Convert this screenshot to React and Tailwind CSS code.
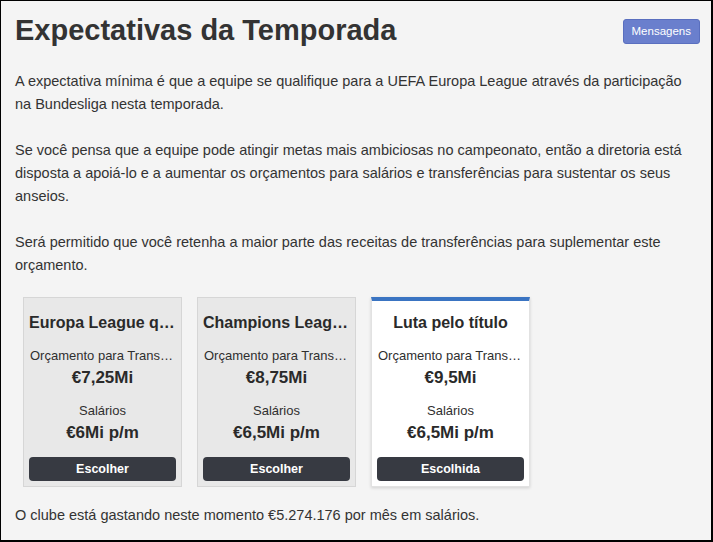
import React from 'react'

const OPTIONS = [
  { title: 'Europa League qualificação', budget: '€7,25Mi', wages: '€6Mi p/m', selected: false },
  { title: 'Champions League qualificação', budget: '€8,75Mi', wages: '€6,5Mi p/m', selected: false },
  { title: 'Luta pelo título', budget: '€9,5Mi', wages: '€6,5Mi p/m', selected: true },
]

function OptionCard({ o }) {
  return (
    <div
      className={`w-[159px] h-[190px] flex flex-col text-center border px-[5px] pb-[5px] ${
        o.selected
          ? 'bg-white border-[#e2e2e2] border-t-[4px] border-t-[#3a74c2] pt-[11px] shadow-[0_1px_3px_rgba(0,0,0,0.15)]'
          : 'bg-[#e8e8e8] border-[#d6d6d6] pt-[14px]'
      }`}
    >
      <p className="text-[16px] leading-[22px] font-semibold text-[#2a2a2a] truncate">{o.title}</p>
      <p className="mt-[14px] text-[13px] leading-[16px] text-[#2f2f2f] truncate px-[1px]">Orçamento para Transferências</p>
      <p className="mt-[3px] text-[17px] leading-[22px] font-semibold text-[#2a2a2a]">{o.budget}</p>
      <p className="mt-[14px] text-[13px] leading-[16px] text-[#2f2f2f]">Salários</p>
      <p className="mt-[3px] text-[17px] leading-[22px] font-semibold text-[#2a2a2a]">{o.wages}</p>
      <button className="mt-auto h-[24px] w-full rounded-[4px] bg-[#373a42] text-white text-[12.5px] font-semibold">
        {o.selected ? 'Escolhida' : 'Escolher'}
      </button>
    </div>
  )
}

export default function App() {
  return (
    <div
      className="w-[713px] h-[542px] bg-[#f4f4f4] border border-black border-r-2 border-b-2 text-[#333] overflow-hidden"
      style={{ fontFamily: '"Liberation Sans", Arial, sans-serif' }}
    >
      <div className="pl-[14px] pr-[10px]">
        <div className="flex items-start justify-between pt-[12px]">
          <h1 className="text-[29px] leading-[34px] font-bold text-[#333]">Expectativas da Temporada</h1>
          <button className="mt-[6px] mr-[1px] h-[25px] px-[8px] rounded-[3px] bg-[#6a7fcd] border border-[#5a6fbf] text-white text-[11.5px]">
            Mensagens
          </button>
        </div>

        <div className="mt-[23px] text-[14.5px] leading-[23px] pr-[10px] space-y-[23px]">
          <p>
            A expectativa mínima é que a equipe se qualifique para a UEFA Europa League através da participação na
            Bundesliga nesta temporada.
          </p>
          <p>
            Se você pensa que a equipe pode atingir metas mais ambiciosas no campeonato, então a diretoria está disposta
            a apoiá-lo e a aumentar os orçamentos para salários e transferências para sustentar os seus anseios.
          </p>
          <p>Será permitido que você retenha a maior parte das receitas de transferências para suplementar este orçamento.</p>
        </div>

        <div className="mt-[20px] pl-[8px] flex gap-[15px]">
          {OPTIONS.map((o) => (
            <OptionCard key={o.title} o={o} />
          ))}
        </div>

        <p className="mt-[17px] text-[14.5px] leading-[23px]">
          O clube está gastando neste momento €5.274.176 por mês em salários.
        </p>
      </div>
    </div>
  )
}
